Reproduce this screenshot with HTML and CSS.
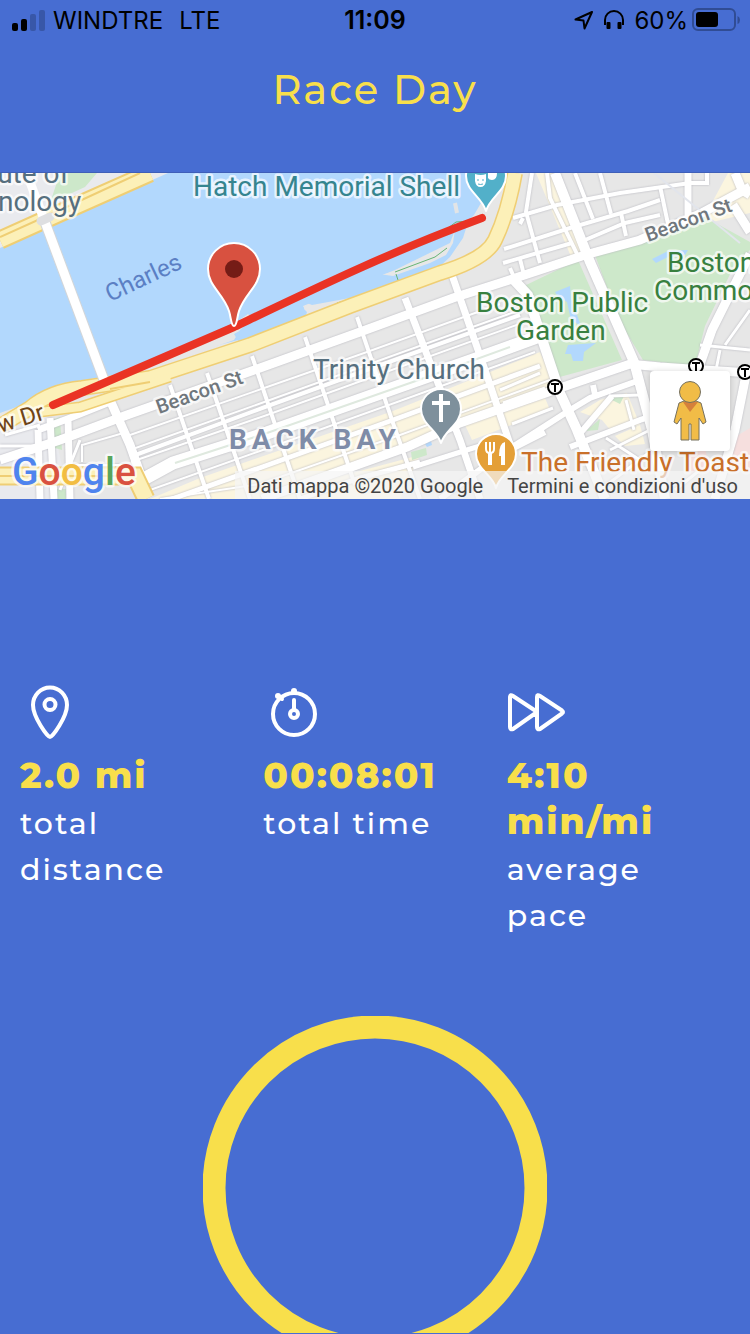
FILE: index.html
```html
<!DOCTYPE html>
<html lang="en">
<head>
<meta charset="utf-8">
<meta name="viewport" content="width=device-width, initial-scale=1">
<title>Race Day</title>
<link rel="stylesheet" href="styles.css">
</head>
<body>
<div class="screen">
  <header class="header">
    <div class="status">
      <div class="status-side">
        <svg class="signal" viewBox="0 0 33 21" aria-hidden="true">
          <rect x="0" y="13" width="6" height="8" rx="2"/>
          <rect x="9" y="9" width="6" height="12" rx="2"/>
          <rect class="dim" x="18" y="4" width="6" height="17" rx="2"/>
          <rect class="dim" x="27" y="0" width="6" height="21" rx="2"/>
        </svg>
        <span class="carrier">WINDTRE</span>
        <span>LTE</span>
      </div>
      <time class="clock">11:09</time>
      <div class="status-side status-right">
        <svg class="location" viewBox="0 0 20 20" aria-hidden="true"><path d="M18 2 1.500 9.500 9.500 10.500 10.500 18.500Z"/></svg>
        <svg class="phones" viewBox="0 0 20 20" aria-hidden="true"><path class="band" d="M1 15V10a9 9 0 0 1 18 0v5"/><rect x="2.500" y="12" width="4" height="7" rx="1"/><rect x="13.500" y="12" width="4" height="7" rx="1"/></svg>
        <span>60%</span>
        <svg class="battery" viewBox="0 0 48 24" aria-hidden="true"><rect class="case" x="1" y="1" width="42" height="21" rx="5"/><rect x="4" y="4" width="22" height="15" rx="3"/><path class="nub" d="M45.500 8q2.500 1 2.500 4t-2.500 4z"/></svg>
      </div>
    </div>
    <h1 class="title">Race Day</h1>
  </header>

  <section class="map" aria-label="Map">
    <svg class="map-art" viewBox="0 173 750 326" role="img" aria-label="Route along the Charles River">
      <rect class="land" x="0" y="173" width="750" height="326"/>
      <path class="campus" d="M0 173H170L0 248ZM0 432 50 415 70 499H0Z"/>
      <path class="beige" d="M150 499 200 478 393 411 540 352 556 388 470 424 545 398 550 410 472 440 465 425 407 447 300 487 420 455 400 499ZM580 412 600 400 627 393 640 425 612 432 602 420ZM615 436 640 425 645 444 625 446ZM536 173h18l32 80-14 6ZM728 173h22v40l-50 12Z"/>
      <path class="park" d="M60 173H97L85 187 50 203Z"/>
      <path class="water" d="M168 173H490L481 203 474 215 455 234 446 255 385 274 318 300 303 306 307 313 305 320 250 337 180 355 120 374 60 384 25 404 0 413V248Z"/>
      <path class="land" d="M455 230 485 208 505 210 495 250 460 264 300 322 305 306 315 302 395 270 450 243Z"/>
      <path class="land" d="M225 330 248 314 252 318 240 330 234 340 160 366 120 378Z"/>
      <path class="water" d="M319 292 345 284 379 274 393 276 430 263 446 255 453 243 455 229 468 222 463 238 450 257 437 269 400 283 350 298 312 305 300 300ZM234 334 285 306 300 305 307 312 305 319 270 332 240 344Z"/>
      <path class="path-green" d="M395 272 435 257 447 248M448 228 456 222 470 221M337 303 348 300M396 274 398 280"/>
      <path class="sand" d="M455 203 457 213"/>

      <path class="park" d="M522 287 578 260 622 360 556 378ZM595 255 650 240 703 216 750 242V250L733 268 705 326 695 366 643 360 619 320Z"/>
      <path class="water" d="M555 292 570 286 571 299 576 312 581 326 571 320 567 302 558 297ZM568 345 596 343 584 352 583 361 573 361 571 354 565 354ZM652 259 668 251 688 250 685 255 670 256 656 263Z"/>
      <path class="park" d="M411 452 426 448 427 455 412 460ZM586 431 600 419 598 430ZM610 399 625 394 620 404ZM52 420 60 417 62 450 55 448ZM57 489H66V499H57Z"/>
      <path class="water" d="M425 444 431 441 432 445 427 447Z"/>
      <path class="pink" d="M735 437 750 428V470H728ZM690 455 705 448 710 470 690 475Z"/>

      <g class="streets">
        <path class="street" d="M130 435 267 387 367 352 450 322 500 304" stroke-width="2"/>
        <path class="street" d="M82 462V445L127 432M75 465H125M130 450 267 401 400 353 520 310M131 462 267 415 400 367 525 322" stroke-width="2"/>
        <path class="street" d="M130 457 265 407 400 358 520 315" stroke-width="4"/>
        <path class="street" d="M150 490 260 451 400 401 535 352M160 499 260 484 400 435 550 380" stroke-width="2"/>
        <path class="street" d="M155 505 265 466 393 420 540 366M413 467 470 449 500 440M300 499 360 478 420 462" stroke-width="5"/>
        <path class="street" d="M0 460 60 440 127 415 260 368 360 332 453 298 500 283 585 255 640 240 700 214 750 187" stroke-width="9"/>
        <path class="street" d="M140 481 173 463 267 433 493 353 540 336" stroke-width="13"/>
        <path class="street" d="M262 499 407 447 460 423 560 388 630 364 660 367 750 373" stroke-width="9"/>
        <path class="street" d="M170 385 209 499M207 373 250 499M252 356 300 499M305 337 355 485M357 317 393 423 420 499" stroke-width="4"/>
        <path class="street" d="M405 298 460 440 480 499M452 275 485 370 512 450" stroke-width="7"/>
        <path class="street" d="M110 400 130 445 145 487" stroke-width="9"/>
        <path class="street" d="M514 280 528 295 540 333 560 393 577 430 605 499M555 173 590 262 634 362 652 430 665 499" stroke-width="10"/>
        <path class="street" d="M440 499 500 455 570 410 590 398 640 380M577 437 612 396M570 447 640 420 700 400M500 455 545 432M595 395 593 385" stroke-width="6"/>
        <path class="street" d="M38 430 40 499M50 418 54 499M68 418 70 499M38 430 70 418 110 402" stroke-width="7"/>
        <path class="street" d="M0 446H40M5 435 40 425M60 490 80 440" stroke-width="3"/>
        <path class="street" d="M735 173 742 190 750 195M733 205 750 232M750 254 712 330 698 370M746 375 735 430 715 499" stroke-width="9"/>
        <path class="street" d="M513 218 557 205 620 193 690 183 707 183V173M504 249 570 228 628 211 660 200M585 240 625 223 660 215M503 263 572 243M510 268 516 282M520 259 524 275" stroke-width="4"/>
        <path class="street" d="M532 173 526 212 540 263M547 173 550 198 577 254M575 173 593 219M600 173 611 214M660 186 668 224M621 213 626 236M520 224 523 218" stroke-width="4"/>
        <path class="street" d="M688 173V216" stroke-width="7"/>
        <path class="street" d="M500 390 540 373M503 403 545 388M512 424 553 408M610 450 650 430M606 438 640 460M600 490 650 452M675 490 700 470M700 345 750 350M720 350 716 370M750 310 725 345M610 396 640 395M626 400 634 430" stroke-width="3"/>
      </g>
      <path class="median" d="M175 463 267 433 430 376 510 347"/>
      <path class="diag" d="M654 173 740 243"/>

      <g class="highway">
        <path class="hw-edge" d="M0 240 60 213 150 173"/>
        <path class="hw-fill" d="M0 240 60 213 150 173"/>
        <path class="hw-line" d="M0 237 60 210 140 173"/>
        <path class="hw-edge" d="M0 476H135L146 499"/>
        <path class="hw-fill" d="M0 476H135L146 499"/>
        <path class="hw-edge main" d="M0 426 30 408Q50 391 82 388L150 378 250 345 350 306 440 273Q486 259 495 240 508 213 515 173"/>
        <path class="hw-edge slim" d="M40 412 80 407 170 377"/>
        <path class="hw-fill main" d="M0 426 30 408Q50 391 82 388L150 378 250 345 350 306 440 273Q486 259 495 240 508 213 515 173"/>
        <path class="hw-fill slim" d="M40 412 80 407 170 377"/>
        <path class="hw-line" d="M0 476H135M110 389 150 382"/>
      </g>
      <path class="bridge-edge" d="M45 222 104 380"/>
      <path class="bridge" d="M30 182 45 222 104 380"/>
      <path class="pier" d="M41 221 50 217"/>

      <path class="route" d="M53 405 234 327C320 286 390 252 482 218"/>

      <g class="label place">
        <text class="slate" x="-12" y="183">tute of</text>
        <text class="slate" x="-2" y="211">nology</text>
        <text class="teal" x="193" y="196">Hatch Memorial Shell</text>
        <text class="slate" x="313" y="379">Trinity Church</text>
        <text class="green" x="476" y="312">Boston Public</text>
        <text class="green" x="516" y="340">Garden</text>
        <text class="green" x="667" y="272">Boston</text>
        <text class="green" x="654" y="300">Common</text>
        <text class="orange" x="521" y="472">The Friendly Toast</text>
      </g>
      <text class="label river" transform="translate(110 302) rotate(-25)">Charles</text>
      <text class="label road" transform="translate(159 414) rotate(-20)">Beacon St</text>
      <text class="label road" transform="translate(648 242) rotate(-20)">Beacon St</text>
      <text class="label drive" transform="translate(0 433) rotate(-17)">w Dr</text>
      <text class="label district" x="229" y="449">BACK BAY</text>
      <text class="label logo" x="12" y="485"><tspan class="g-blue">G</tspan><tspan class="g-red">o</tspan><tspan class="g-yellow">o</tspan><tspan class="g-blue">g</tspan><tspan class="g-green">l</tspan><tspan class="g-red">e</tspan></text>

      <g class="pin">
        <path class="pin-red" d="M234 326c-3 0-3-9-5-15-6-18-21-25-21-42a26 26 0 0 1 52 0c0 17-15 24-21 42-2 6-2 15-5 15Z"/>
        <path class="pin-teal" d="M486 211c-4-14-20-20-20-35a20 20 0 0 1 40 0c0 15-16 21-20 35Z"/>
        <path class="pin-slate" d="M441 443c-4-13-20-19-20-34a20 20 0 0 1 40 0c0 15-16 21-20 34Z"/>
        <path class="pin-food" d="M496 488c-3-13-20-19-20-34a20 20 0 0 1 40 0c0 15-17 21-20 34Z"/>
      </g>
      <circle class="pin-dot" cx="234" cy="269" r="9"/>
      <path class="cross" d="M441 394V422M432 403H450"/>
      <path class="fork" d="M486 442V449Q486 453 490 453T494 449V442M490 442V453"/>
      <path class="fork thick" d="M490 453V465M503 465V454"/>
      <path class="mask" d="M505 442V456H499Q499 443 505 442Z"/>
      <path class="mask" d="M475 174q6 2 11 0v7q-1 6-5.500 6t-5.500-6ZM488 173h9q0 7-5 7-3 0-4-2Z"/>
      <path class="mask-eyes" d="M477 180h2M482 180h2M478 184q2.500 1 5 0"/>

      <g class="station">
        <circle cx="555" cy="387" r="7"/><path d="M551 384H559M555 384V392"/>
        <circle cx="696" cy="366" r="7"/><path d="M692 363H700M696 363V371"/>
        <circle cx="745" cy="372" r="7"/><path d="M741 369H749M745 369V377"/>
      </g>
    </svg>
    <button class="pegman" type="button" aria-label="Street View">
      <svg viewBox="0 0 34 62" aria-hidden="true">
        <path class="peg" d="M11 21 6 23 1 42 4 44 8 38V60H16V44H18V60H26V38L30 44 33 42 28 23 23 21Z"/>
        <path class="peg-neck" d="M10 22H25L17 32Z"/>
        <circle class="peg" cx="17" cy="12" r="10.500"/>
      </svg>
    </button>
    <div class="credits">
      <span>Dati mappa ©2020 Google</span>
      <a href="#terms">Termini e condizioni d'uso</a>
    </div>
  </section>

  <section class="stats">
    <div class="stat">
      <svg class="stat-icon" viewBox="0 0 60 60" aria-hidden="true"><path d="M30 55C27.500 55 13 35 13 23a17 17.500 0 0 1 34 0C47 35 32.500 55 30 55Z"/><circle cx="30" cy="22.500" r="5.500"/></svg>
      <strong class="value">2.0 mi</strong>
      <span class="caption">total distance</span>
    </div>
    <div class="stat">
      <svg class="stat-icon" viewBox="0 0 60 60" aria-hidden="true"><circle cx="31" cy="32" r="21"/><circle cx="31" cy="32" r="4"/><path d="M31 28V18"/><circle class="solid" cx="31" cy="9" r="3"/><circle class="solid" cx="15" cy="14" r="3"/><path d="M15 14 19 17"/></svg>
      <strong class="value">00:08:01</strong>
      <span class="caption">total time</span>
    </div>
    <div class="stat">
      <svg class="stat-icon" viewBox="0 0 60 60" aria-hidden="true"><path d="M3 15V45Q3 48 6 47L28 31.500Q30 30 28 28.500L6 14Q3 12 3 15ZM30 15V45Q30 48 33 47L55 31.500Q57 30 55 28.500L33 14Q30 12 30 15Z"/></svg>
      <strong class="value">4:10 min/mi</strong>
      <span class="caption">average pace</span>
    </div>
  </section>

  <section class="progress">
    <svg class="ring" viewBox="0 0 344 344" role="img" aria-label="Race progress"><circle cx="172" cy="172" r="161"/></svg>
  </section>
</div>
</body>
</html>
```
FILE: styles.css
```css
* { box-sizing: border-box; }

body {
  margin: 0;
  background: #476dd2;
  font-family: Montserrat, Inter, sans-serif;
  color: #fff;
}

.screen {
  display: flex;
  flex-direction: column;
  height: 100vh;
  overflow: hidden;
}

.header {
  flex: none;
  padding-bottom: 54px;
  border-bottom: 1px solid #3f5fb8;
}

.status {
  display: grid;
  grid-template-columns: 1fr auto 1fr;
  align-items: center;
  height: 40px;
  padding: 0 12px;
  font-family: Inter, sans-serif;
  font-size: 24px;
  color: #000;
}

.status-side { display: flex; align-items: center; gap: 8px; }
.status-right { justify-content: flex-end; gap: 4px; }
.carrier { margin-right: 8px; }
.clock { font-weight: 600; font-size: 25px; }
.signal { width: 33px; height: 21px; }
.signal .dim { fill: #3857a8; }
.location { width: 20px; height: 20px; margin-right: 6px; fill: none; stroke: #000; stroke-width: 2; stroke-linejoin: round; }
.phones { width: 20px; height: 20px; margin-right: 6px; }
.phones .band { fill: none; stroke: #000; stroke-width: 2; }
.battery { width: 48px; height: 24px; margin-right: -2px; }
.battery .case { fill: none; stroke: #304c94; stroke-width: 2; }
.battery .nub { fill: #304c94; }

.title {
  margin: 22px 0 0;
  font-size: 40px;
  font-weight: 500;
  line-height: 56px;
  letter-spacing: 2px;
  text-align: center;
  color: #f8df4b;
}

.map { position: relative; flex: none; overflow: hidden; font-family: Roboto, sans-serif; }
.map-art { display: block; width: 100%; height: auto; }

.land { fill: #e7e7e7; }
.campus { fill: #e9eaee; }
.beige { fill: #fbf5df; }
.park { fill: #cde8ca; }
.water { fill: #b2d8fd; }
.pink { fill: #f6dfde; }
.path-green { fill: none; stroke: #68b576; stroke-width: 1; }
.sand { stroke: #e2e4e6; stroke-width: 4; }
.streets { filter: drop-shadow(0 0 1px #b4b4bc); }
.street { fill: none; stroke: #fff; }
.median { fill: none; stroke: #dfe9df; stroke-width: 2; }
.diag { stroke: #e2e5ec; stroke-width: 2; }
.hw-edge { fill: none; stroke: #efce74; stroke-width: 19; }
.hw-fill { fill: none; stroke: #fcf0b8; stroke-width: 15; }
.hw-edge.main { stroke-width: 16; }
.hw-fill.main { stroke-width: 13; }
.hw-edge.slim { stroke-width: 11; }
.hw-fill.slim { stroke-width: 8; }
.hw-line { fill: none; stroke: #efce74; stroke-width: 2; }
.bridge-edge { stroke: #d3d6d9; stroke-width: 11; fill: none; }
.bridge { stroke: #fff; stroke-width: 9; fill: none; }
.pier { stroke: #dedfe1; stroke-width: 9; stroke-linecap: round; }
.route { fill: none; stroke: #ea3324; stroke-width: 8; stroke-linecap: round; }

.label { paint-order: stroke; stroke: #fff; stroke-opacity: 0.7; stroke-width: 5; stroke-linejoin: round; }
.place { font-size: 28px; }
.slate { fill: #566f7e; }
.teal { fill: #35858f; }
.green { fill: #38803f; }
.orange { fill: #c9702a; }
.river { font-size: 24px; fill: #5b7fc4; stroke: none; }
.road { font-size: 20px; font-weight: 500; fill: #70777d; }
.drive { font-size: 24px; fill: #6f4517; }
.district { font-size: 28px; font-weight: 700; letter-spacing: 5px; fill: #7f8ca8; }
.logo { font-size: 39px; font-weight: 500; }
.g-blue { fill: #4f84ee; }
.g-red { fill: #d95140; }
.g-yellow { fill: #f2bd42; }
.g-green { fill: #58a55c; }

.pin { stroke: #fff; stroke-width: 2; stroke-linejoin: round; }
.pin-red { fill: #d85140; }
.pin-teal { fill: #52b0c9; }
.pin-slate { fill: #7e909c; }
.pin-food { fill: #e49f37; }
.pin-dot { fill: #751c16; }
.cross { stroke: #fff; stroke-width: 4; }
.fork { fill: none; stroke: #fff; stroke-width: 2; }
.fork.thick { stroke-width: 4; }
.mask { fill: #fff; }
.mask-eyes { fill: none; stroke: #52b0c9; stroke-width: 1; }
.station { fill: #fff; stroke: #000; stroke-width: 2; }

.pegman {
  position: absolute;
  right: 20px;
  bottom: 48px;
  display: grid;
  place-items: center;
  width: 80px;
  height: 80px;
  padding: 0;
  border: 0;
  border-radius: 4px;
  background: #fff;
  box-shadow: 0 1px 6px rgba(0, 0, 0, 0.2);
}
.pegman svg { width: 34px; height: 62px; }
.peg { fill: #f1bc47; stroke: #75705f; stroke-width: 1; }
.peg-neck { fill: #d5803b; }

.credits {
  position: absolute;
  right: 0;
  bottom: 0;
  display: flex;
  gap: 24px;
  padding: 2px 12px 0;
  font-size: 20px;
  line-height: 26px;
  white-space: nowrap;
  color: #444;
  background: rgba(245, 245, 245, 0.7);
}
.credits a { color: inherit; text-decoration: none; }

.stats {
  display: grid;
  grid-template-columns: repeat(3, 1fr);
  flex: none;
  padding: 183px 0 77px 20px;
}

.stat { display: flex; flex-direction: column; padding-right: 64px; letter-spacing: 2px; line-height: 46px; }
.stat-icon { width: 60px; height: 60px; margin-bottom: 10px; fill: none; stroke: #fff; stroke-width: 4; stroke-linecap: round; stroke-linejoin: round; }
.stat-icon .solid { fill: #fff; stroke: none; }
.value { margin-bottom: 3px; font-size: 36px; font-weight: 800; color: #f8df4b; }
.caption { font-size: 30px; font-weight: 500; }

.progress {
  display: flex;
  flex: 1;
  justify-content: center;
  align-items: flex-start;
  min-height: 0;
  overflow: hidden;
  border-bottom: 1px solid #476dd2;
}
.ring { flex: none; width: 344px; height: 344px; fill: none; stroke: #f8df4b; stroke-width: 23; }
```
